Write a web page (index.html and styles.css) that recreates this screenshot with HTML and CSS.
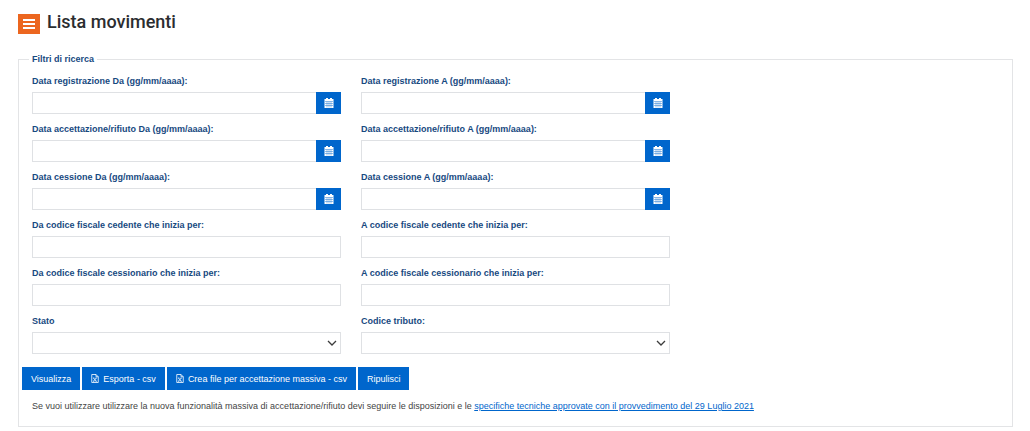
FILE: index.html
```
<!DOCTYPE html>
<html lang="it">
<head>
  <meta charset="UTF-8">
  <meta name="viewport" content="width=device-width, initial-scale=1.0">
  <title>Lista movimenti</title>
  <link rel="stylesheet" href="styles.css">
</head>
<body>
  <!-- shared icons -->
  <svg class="sprite" aria-hidden="true">
    <symbol id="icon-calendar" viewBox="0 0 10 10">
      <path fill="currentColor" d="M2 0h2v1h2V0h2v1h1.500v9h-9V1H2z"/>
      <path fill="none" stroke="#0066cc" stroke-width=".6" stroke-opacity=".7" d="M1 3.500h8M1 5.500h8M1 7.500h8M3 3.500v6M5 3.500v6M7 3.500v6"/>
    </symbol>
    <symbol id="icon-excel" viewBox="0 0 16 18">
      <path fill="none" stroke="currentColor" stroke-width="1.600" stroke-linejoin="round" d="M1.500 1h8.500l4.500 4.500V17h-13zM10 1v4.500h4.500M5 8l5.500 6.500M10.500 8L5 14.500M4.200 8h2.500M9 8h2.500M4.200 14.500h2.500M9 14.500h2.500"/>
    </symbol>
  </svg>

  <header class="page-header">
    <span class="menu-icon">
      <svg viewBox="0 0 22 20" aria-hidden="true">
        <path fill="none" stroke="#fff" stroke-width="2" d="M5 6h12M5 10h12M5 14h12"/>
      </svg>
    </span>
    <h1>Lista movimenti</h1>
  </header>

  <form>
    <fieldset class="filters">
      <legend>Filtri di ricerca</legend>

      <div class="fields">
        <div class="field">
          <label for="reg-da">Data registrazione Da (gg/mm/aaaa):</label>
          <div class="date-group">
            <input type="text" id="reg-da">
            <button type="button" class="date-button" aria-label="Apri calendario"><svg><use href="#icon-calendar"/></svg></button>
          </div>
        </div>
        <div class="field second">
          <label for="reg-a">Data registrazione A (gg/mm/aaaa):</label>
          <div class="date-group">
            <input type="text" id="reg-a">
            <button type="button" class="date-button" aria-label="Apri calendario"><svg><use href="#icon-calendar"/></svg></button>
          </div>
        </div>

        <div class="field">
          <label for="acc-da">Data accettazione/rifiuto Da (gg/mm/aaaa):</label>
          <div class="date-group">
            <input type="text" id="acc-da">
            <button type="button" class="date-button" aria-label="Apri calendario"><svg><use href="#icon-calendar"/></svg></button>
          </div>
        </div>
        <div class="field second">
          <label for="acc-a">Data accettazione/rifiuto A (gg/mm/aaaa):</label>
          <div class="date-group">
            <input type="text" id="acc-a">
            <button type="button" class="date-button" aria-label="Apri calendario"><svg><use href="#icon-calendar"/></svg></button>
          </div>
        </div>

        <div class="field">
          <label for="ces-da">Data cessione Da (gg/mm/aaaa):</label>
          <div class="date-group">
            <input type="text" id="ces-da">
            <button type="button" class="date-button" aria-label="Apri calendario"><svg><use href="#icon-calendar"/></svg></button>
          </div>
        </div>
        <div class="field second">
          <label for="ces-a">Data cessione A (gg/mm/aaaa):</label>
          <div class="date-group">
            <input type="text" id="ces-a">
            <button type="button" class="date-button" aria-label="Apri calendario"><svg><use href="#icon-calendar"/></svg></button>
          </div>
        </div>

        <div class="field">
          <label for="cedente-da">Da codice fiscale cedente che inizia per:</label>
          <input type="text" id="cedente-da">
        </div>
        <div class="field second">
          <label for="cedente-a">A codice fiscale cedente che inizia per:</label>
          <input type="text" id="cedente-a">
        </div>

        <div class="field">
          <label for="cessionario-da">Da codice fiscale cessionario che inizia per:</label>
          <input type="text" id="cessionario-da">
        </div>
        <div class="field second">
          <label for="cessionario-a">A codice fiscale cessionario che inizia per:</label>
          <input type="text" id="cessionario-a">
        </div>

        <div class="field">
          <label for="stato">Stato</label>
          <div class="select-wrap">
            <select id="stato"><option></option></select>
            <svg viewBox="0 0 10 6" aria-hidden="true"><path d="M1 1l4 4 4-4"/></svg>
          </div>
        </div>
        <div class="field second">
          <label for="tributo">Codice tributo:</label>
          <div class="select-wrap">
            <select id="tributo"><option></option></select>
            <svg viewBox="0 0 10 6" aria-hidden="true"><path d="M1 1l4 4 4-4"/></svg>
          </div>
        </div>
      </div>

      <div class="actions">
        <button type="submit" class="btn">Visualizza</button>
        <button type="button" class="btn"><svg><use href="#icon-excel"/></svg>Esporta - csv</button>
        <button type="button" class="btn"><svg><use href="#icon-excel"/></svg>Crea file per accettazione massiva - csv</button>
        <button type="reset" class="btn">Ripulisci</button>
      </div>

      <p class="note">Se vuoi utilizzare utilizzare la nuova funzionalità massiva di accettazione/rifiuto devi seguire le disposizioni e le <a href="#">specifiche tecniche approvate con il provvedimento del 29 Luglio 2021</a></p>
    </fieldset>
  </form>
</body>
</html>
```
FILE: styles.css
```
* {
  margin: 0;
  padding: 0;
  box-sizing: border-box;
}

body {
  font-family: "Liberation Sans", Arial, sans-serif;
  font-size: 9px;
  line-height: 12px;
  color: #444;
  background: #fff;
  padding: 10px 17px 4px 18px;
}

.sprite {
  position: absolute;
  width: 0;
  height: 0;
}

.page-header {
  display: flex;
  align-items: flex-end;
  gap: 7px;
  margin-bottom: 19px;
}

.menu-icon {
  width: 22px;
  height: 20px;
  background: #ec661f;
}

.menu-icon svg {
  display: block;
}

h1 {
  font-family: Roboto, "Open Sans", sans-serif;
  font-size: 18px;
  line-height: 24px;
  font-weight: 500;
  color: #2b2d30;
}

.filters {
  border: 1px solid #e3e4e6;
  padding: 10px 3px 14px;
}

legend {
  margin-left: 7px;
  padding: 0 3px;
  font-weight: 700;
  color: #17497f;
}

.fields {
  display: grid;
  grid-template-columns: repeat(3, 1fr);
  gap: 9px 20px;
  padding: 0 10px;
}

.field {
  grid-column: 1;
}

.field.second {
  grid-column: 2;
}

.field label {
  display: block;
  margin-bottom: 5px;
  font-weight: 700;
  color: #17497f;
}

input,
select {
  display: block;
  width: 100%;
  height: 22px;
  padding: 0 6px;
  border: 1px solid #dfe1e4;
  border-radius: 0;
  background: #fff;
  color: #444;
  font: inherit;
}

.date-group {
  display: flex;
}

.date-group input {
  flex: 1;
  min-width: 0;
  border-right: 0;
}

.date-button {
  display: flex;
  align-items: center;
  justify-content: center;
  width: 25px;
  height: 22px;
  border: 0;
  background: #0066cc;
  color: #fff;
  cursor: pointer;
}

.date-button svg {
  width: 10px;
  height: 10px;
}

.select-wrap {
  position: relative;
}

select {
  appearance: none;
}

/* arrow sits over the select */
.select-wrap svg {
  position: absolute;
  top: 8px;
  right: 4px;
  width: 10px;
  height: 6px;
  fill: none;
  stroke: #3c3c3c;
  stroke-width: 1.3;
  pointer-events: none;
}

.actions {
  display: flex;
  flex-wrap: wrap;
  gap: 2px;
  margin-top: 13px;
}

.btn {
  display: flex;
  align-items: center;
  gap: 4px;
  height: 23px;
  padding: 0 9px;
  border: 0;
  background: #0066cc;
  color: #fff;
  font: inherit;
  cursor: pointer;
}

.btn svg {
  width: 8px;
  height: 9px;
}

.note {
  margin-top: 10px;
  padding: 0 10px;
}

.note a {
  color: #0066cc;
}

.date-button:hover,
.btn:hover {
  background: #0052a3;
}

@media (max-width: 700px) {
  .fields {
    grid-template-columns: 1fr;
  }

  .field.second {
    grid-column: 1;
  }
}
```
